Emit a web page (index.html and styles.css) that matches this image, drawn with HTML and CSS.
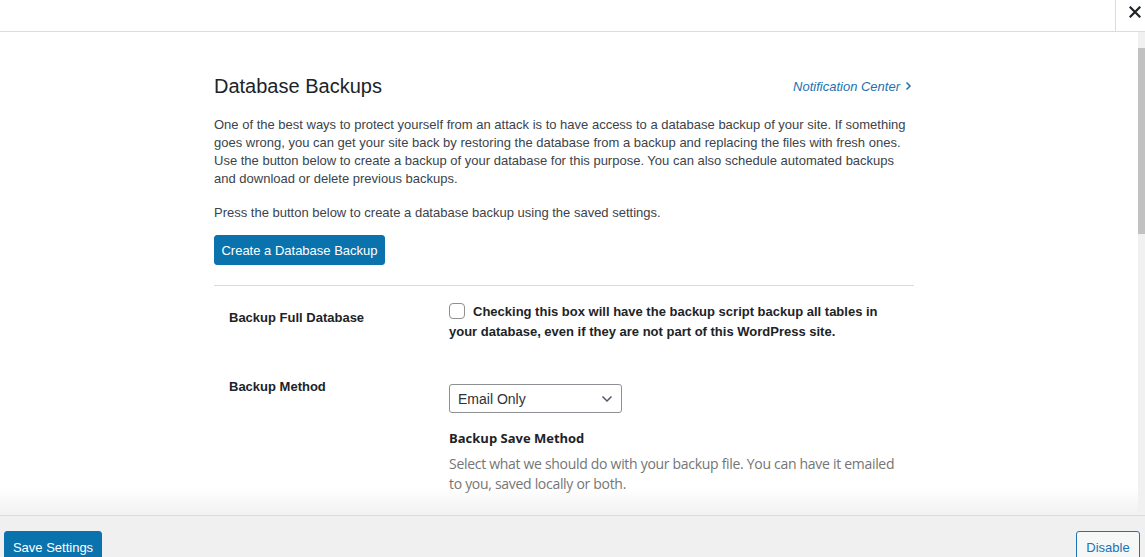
FILE: index.html
```html
<!DOCTYPE html>
<html lang="en">
<head>
<meta charset="utf-8">
<title>Database Backups</title>
<link rel="stylesheet" href="styles.css">
</head>
<body>
<div class="page">
  <header class="topbar">
    <button class="close" aria-label="Close">
      <svg width="12" height="12" viewBox="0 0 12 12"><path d="M1.5 1.5 L10.5 10.5 M10.5 1.5 L1.5 10.5" stroke="#1d2327" stroke-width="2.2" stroke-linecap="square"/></svg>
    </button>
  </header>
  <div class="main">
    <div class="content">
      <div class="inner">
        <div class="head">
          <h1 class="title">Database Backups</h1>
          <a class="notif" href="#">Notification Center <svg class="chev" width="7" height="10" viewBox="0 0 7 10"><path d="M1.5 1.5 L5 5 L1.5 8.5" fill="none" stroke="#2271b1" stroke-width="1.5"/></svg></a>
        </div>
        <p class="intro">One of the best ways to protect yourself from an attack is to have access to a database backup of your site. If something goes wrong, you can get your site back by restoring the database from a backup and replacing the files with fresh ones. Use the button below to create a backup of your database for this purpose. You can also schedule automated backups and download or delete previous backups.</p>
        <p class="press">Press the button below to create a database backup using the saved settings.</p>
        <button class="btn-primary create">Create a Database Backup</button>
        <div class="rule"></div>
        <div class="form">
          <div class="label l1">Backup Full Database</div>
          <div class="field f1">
            <span class="check"></span><span class="check-text">Checking this box will have the backup script backup all tables in your database, even if they are not part of this WordPress site.</span>
          </div>
          <div class="label l2">Backup Method</div>
          <div class="field f2">
            <div class="select"><span>Email Only</span>
              <svg width="12" height="8" viewBox="0 0 12 8"><path d="M1.5 1.5 L6 6 L10.5 1.5" fill="none" stroke="#50575e" stroke-width="1.5"/></svg>
            </div>
            <div class="sub-title">Backup Save Method</div>
            <div class="sub-desc">Select what we should do with your backup file. You can have it emailed to you, saved locally or both.</div>
          </div>
        </div>
      </div>
      <div class="fade"></div>
    </div>
    <div class="scrollbar">
      <div class="arrow up"></div>
      <div class="thumb"></div>
      <div class="track"></div>
      <div class="arrow down"></div>
    </div>
  </div>
  <footer class="footer">
    <button class="btn-primary save">Save Settings</button>
    <button class="btn-secondary">Disable</button>
  </footer>
</div>
</body>
</html>
```

FILE: styles.css
```css
* { box-sizing: border-box; }
html, body { margin: 0; padding: 0; }
body {
  font-family: "Liberation Sans", Arial, sans-serif;
  font-size: 13px;
  color: #3c434a;
  background: #fff;
  width: 1145px;
  height: 557px;
  overflow: hidden;
}
.page { display: flex; flex-direction: column; height: 557px; }
.topbar {
  height: 32px;
  border-bottom: 1px solid #dcdcde;
  display: flex;
  justify-content: flex-end;
  flex: none;
}
.close {
  width: 30px;
  height: 31px;
  border: none;
  border-left: 1px solid #dcdcde;
  background: #fff;
  padding: 0 0 8px 8px;
  display: flex;
  align-items: center;
  justify-content: center;
}
.main { flex: 1; display: flex; min-height: 0; }
.content { flex: 1; position: relative; overflow: hidden; }
.inner { width: 700px; margin-left: 214px; padding-top: 41px; }
.head { display: flex; justify-content: space-between; align-items: center; height: 26px; }
.title { margin: 0; font-size: 20px; font-weight: 400; color: #1d2327; line-height: 26px; }
.notif {
  color: #2271b1;
  font-style: italic;
  font-size: 13px;
  text-decoration: none;
  margin-right: 2px;
  display: flex;
  align-items: center;
  gap: 5px;
}
.intro { margin: 17px 0 0; line-height: 18px; }
.press { margin: 16px 0 0; line-height: 18px; }
.btn-primary {
  background: #0a73ae;
  color: #fff;
  border: 1px solid #0a73ae;
  border-radius: 3px;
  font-family: inherit;
  font-size: 13px;
  padding: 0 6px;
  height: 30px;
  white-space: nowrap;
}
.create { margin-top: 13px; width: 171px; }
.rule { margin-top: 20px; height: 1px; background: #dcdcde; }
.form { display: grid; grid-template-columns: 235px 1fr; }
.label { font-weight: 700; color: #1d2327; padding-left: 15px; line-height: 17px; }
.l1 { padding-top: 23px; }
.l2 { padding-top: 36px; }
.field { padding-right: 10px; }
.f1 { padding-top: 16px; font-weight: 700; color: #1d2327; line-height: 20px; }
.check {
  display: inline-block;
  width: 16px;
  height: 16px;
  border: 1px solid #8c8f94;
  border-radius: 4px;
  vertical-align: -3px;
  margin-right: 8px;
}
.f2 { padding-top: 42px; }
.select {
  width: 173px;
  height: 29px;
  border: 1px solid #8c8f94;
  border-radius: 3px;
  display: flex;
  align-items: center;
  justify-content: space-between;
  padding: 0 8px 0 8px;
  font-size: 14px;
  color: #2c3338;
}
.sub-title {
  margin-top: 15px;
  font-family: "Open Sans", sans-serif;
  font-weight: 700;
  font-size: 13px;
  color: #1d2327;
  line-height: 20px;
}
.sub-desc {
  margin-top: 6px;
  font-family: "Open Sans", sans-serif;
  font-size: 14px;
  letter-spacing: -0.3px;
  color: #757575;
  line-height: 20px;
}
.fade {
  position: absolute;
  left: 0; right: 0; bottom: 0;
  height: 28px;
  background: linear-gradient(to bottom, rgba(240,240,241,0), rgba(240,240,241,0.9));
}
.scrollbar {
  width: 7px;
  flex: none;
  background: #f1f1f1;
  display: flex;
  flex-direction: column;
}
.arrow { height: 14px; }
.thumb { height: 186px; background: #c1c1c1; margin-top: 2px; }
.track { flex: 1; }
.footer {
  height: 42px;
  flex: none;
  background: #f0f0f1;
  border-top: 1px solid #dcdcde;
  display: flex;
  justify-content: space-between;
  align-items: flex-start;
  padding: 15px 5px 0 4px;
}
.save { width: 98px; height: 32px; font-size: 13px; }
.btn-secondary {
  background: #f6f7f7;
  color: #2271b1;
  border: 1px solid #2271b1;
  border-radius: 3px;
  font-family: inherit;
  font-size: 13px;
  width: 64px;
  height: 32px;
  white-space: nowrap;
  padding: 0;
}
```
